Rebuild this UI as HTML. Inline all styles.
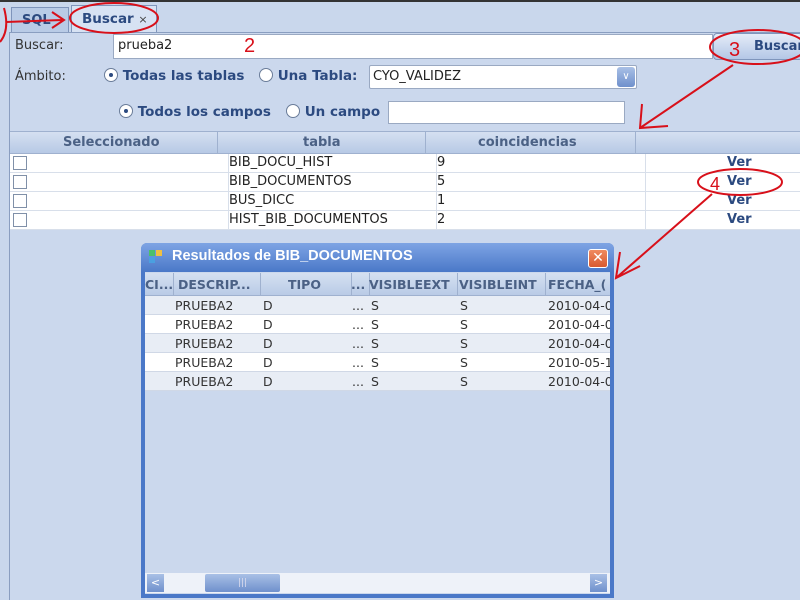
<!DOCTYPE html>
<html><head><meta charset="utf-8"><style>
*{margin:0;padding:0;box-sizing:border-box}
body{width:800px;height:600px;overflow:hidden;background:#c9d7ec;font-family:"DejaVu Sans","Liberation Sans",sans-serif;position:relative;color:#222}
.a{position:absolute}
.b{font-weight:bold;color:#2c4a80}
.in{background:#fff;border:1px solid #9aa9c2}
.radio{display:inline-block;width:14px;height:14px;border:1px solid #6a7c99;border-radius:50%;background:#fff;vertical-align:-2px;position:relative}
.radio.on:after{content:"";position:absolute;left:4px;top:4px;width:4px;height:4px;border-radius:50%;background:#2c4a80}
.cb{position:absolute;left:3px;width:14px;height:14px;border:1px solid #8090a8;background:#fff}
.row{position:absolute;left:10px;width:790px;height:19px;background:#fff;border-bottom:1px solid #d8dfea;font-size:13px}
.row span{position:absolute;top:1px}
.wr{position:absolute;left:145px;width:465px;height:19px;border-bottom:1px solid #d0d8e6;font-size:12.5px;color:#333;overflow:hidden;white-space:nowrap}
.wr span{position:absolute;top:2px;white-space:nowrap}
</style></head><body>
<div class="a" style="left:0;top:0;width:800px;height:2px;background:#333"></div>
<div class="a" style="left:11px;top:7px;width:58px;height:25px;background:#b9cbe6;border:1px solid #7f95bb;border-bottom:none;font-size:13px;color:#2c4a80;font-weight:bold;padding:5px 0 0 10px">SQL</div>
<div class="a" style="left:71px;top:5px;width:86px;height:28px;background:#d7e2f3;border:1px solid #7f95bb;border-bottom:none;font-size:13.5px;color:#2c4a80;font-weight:bold;padding:5px 0 0 10px">Buscar <span style="font-weight:normal;font-size:11px;color:#444">×</span></div>
<div class="a" style="left:9px;top:32px;width:791px;height:568px;border-left:1px solid #8a9ec0;border-top:1px solid #8a9ec0;background:#cbd8ed"></div>
<div class="a" style="left:15px;top:38px;font-size:13px;color:#333">Buscar:</div>
<div class="a in" style="left:113px;top:34px;width:600px;height:25px;font-size:13px;padding:3px 4px">prueba2</div>
<div class="a" style="left:713px;top:33px;width:90px;height:27px;background:linear-gradient(#e4ecf8,#b4c7e6);border:1px solid #7f95bb;border-radius:4px;font-size:13px;font-weight:bold;color:#2c4a80;padding:5px 0 0 40px">Buscar</div>
<div class="a" style="left:15px;top:69px;font-size:13px;color:#333">Ámbito:</div>
<div class="a b" style="left:104px;top:68px;font-size:13.5px"><span class="radio on"></span> Todas las tablas</div>
<div class="a b" style="left:259px;top:68px;font-size:13.5px"><span class="radio"></span> Una Tabla:</div>
<div class="a in" style="left:369px;top:65px;width:268px;height:24px;font-size:13px;padding:3px 3px;border-radius:2px">CYO_VALIDEZ</div>
<div class="a" style="left:617px;top:67px;width:18px;height:20px;background:linear-gradient(#a9c0e6,#6f90cc);border-radius:3px;color:#fff;font-size:10px;text-align:center;line-height:20px">∨</div>
<div class="a b" style="left:119px;top:104px;font-size:13.5px"><span class="radio on"></span> Todos los campos</div>
<div class="a b" style="left:286px;top:104px;font-size:13.5px"><span class="radio"></span> Un campo</div>
<div class="a in" style="left:388px;top:101px;width:237px;height:23px"></div>
<div class="a" style="left:10px;top:131px;width:790px;height:23px;background:linear-gradient(#d5e0f1,#b7c9e5);border-top:1px solid #9fb1cf;border-bottom:1px solid #9fb1cf;font-size:13px;font-weight:bold;color:#4b6185">
<span class="a" style="left:53px;top:3px">Seleccionado</span>
<span class="a" style="left:207px;top:0;width:1px;height:22px;background:#9fb1cf"></span>
<span class="a" style="left:293px;top:3px">tabla</span>
<span class="a" style="left:415px;top:0;width:1px;height:22px;background:#9fb1cf"></span>
<span class="a" style="left:468px;top:3px">coincidencias</span>
<span class="a" style="left:625px;top:0;width:1px;height:22px;background:#9fb1cf"></span>
</div>
<div class="row" style="top:154px"><div class="cb" style="top:2px"></div><span style="left:219px">BIB_DOCU_HIST</span><span style="left:427px">9</span><span style="left:717px;font-weight:bold;color:#2c4a80">Ver</span></div>
<div class="row" style="top:173px"><div class="cb" style="top:2px"></div><span style="left:219px">BIB_DOCUMENTOS</span><span style="left:427px">5</span><span style="left:717px;font-weight:bold;color:#2c4a80">Ver</span></div>
<div class="row" style="top:192px"><div class="cb" style="top:2px"></div><span style="left:219px">BUS_DICC</span><span style="left:427px">1</span><span style="left:717px;font-weight:bold;color:#2c4a80">Ver</span></div>
<div class="row" style="top:211px"><div class="cb" style="top:2px"></div><span style="left:219px">HIST_BIB_DOCUMENTOS</span><span style="left:427px">2</span><span style="left:717px;font-weight:bold;color:#2c4a80">Ver</span></div>
<div class="a" style="left:228px;top:154px;width:1px;height:76px;background:#d8dfea"></div>
<div class="a" style="left:436px;top:154px;width:1px;height:76px;background:#d8dfea"></div>
<div class="a" style="left:645px;top:154px;width:1px;height:76px;background:#d8dfea"></div>
<div class="a" style="left:141px;top:243px;width:473px;height:355px;background:#4a78c8;border-radius:6px 6px 0 0"></div>
<div class="a" style="left:141px;top:243px;width:473px;height:29px;background:linear-gradient(#7ea4e4,#4a78c8);border-radius:6px 6px 0 0"></div>
<div class="a" style="left:149px;top:250px;width:6px;height:6px;background:#4bc06a"></div>
<div class="a" style="left:156px;top:250px;width:6px;height:6px;background:#f0c040"></div>
<div class="a" style="left:149px;top:257px;width:6px;height:6px;background:#4aa0e0"></div>
<div class="a" style="left:172px;top:248px;font-size:14.5px;font-weight:bold;color:#fff;font-family:'Liberation Sans',sans-serif">Resultados de BIB_DOCUMENTOS</div>
<div class="a" style="left:588px;top:249px;width:20px;height:19px;background:linear-gradient(#f08a60,#d85a30);border:1px solid #fff;border-radius:3px;color:#fff;font-size:14px;font-weight:bold;text-align:center;line-height:17px">✕</div>
<div class="a" style="left:145px;top:272px;width:465px;height:322px;background:#cbd8ed"></div>
<div class="a" style="left:145px;top:273px;width:465px;height:23px;background:linear-gradient(#d5e0f1,#b9cbe6);border-bottom:1px solid #9fb1cf;font-size:12.5px;font-weight:bold;color:#4b6185;overflow:hidden;white-space:nowrap">
<span class="a" style="left:0;top:4px">CI...</span><span class="a" style="left:28px;top:0;width:1px;height:22px;background:#9fb1cf"></span>
<span class="a" style="left:33px;top:4px">DESCRIP...</span><span class="a" style="left:115px;top:0;width:1px;height:22px;background:#9fb1cf"></span>
<span class="a" style="left:143px;top:4px">TIPO</span><span class="a" style="left:206px;top:0;width:1px;height:22px;background:#9fb1cf"></span>
<span class="a" style="left:206px;top:4px">...</span><span class="a" style="left:224px;top:0;width:1px;height:22px;background:#9fb1cf"></span>
<span class="a" style="left:224px;top:4px">VISIBLEEXT</span><span class="a" style="left:312px;top:0;width:1px;height:22px;background:#9fb1cf"></span>
<span class="a" style="left:314px;top:4px">VISIBLEINT</span><span class="a" style="left:400px;top:0;width:1px;height:22px;background:#9fb1cf"></span>
<span class="a" style="left:403px;top:4px">FECHA_(</span></div>
<div class="wr" style="top:296px;background:#e8edf5"><span style="left:30px">PRUEBA2</span><span style="left:118px">D</span><span style="left:207px">...</span><span style="left:226px">S</span><span style="left:315px">S</span><span style="left:403px">2010-04-0</span></div>
<div class="wr" style="top:315px;background:#fff"><span style="left:30px">PRUEBA2</span><span style="left:118px">D</span><span style="left:207px">...</span><span style="left:226px">S</span><span style="left:315px">S</span><span style="left:403px">2010-04-0</span></div>
<div class="wr" style="top:334px;background:#e8edf5"><span style="left:30px">PRUEBA2</span><span style="left:118px">D</span><span style="left:207px">...</span><span style="left:226px">S</span><span style="left:315px">S</span><span style="left:403px">2010-04-0</span></div>
<div class="wr" style="top:353px;background:#fff"><span style="left:30px">PRUEBA2</span><span style="left:118px">D</span><span style="left:207px">...</span><span style="left:226px">S</span><span style="left:315px">S</span><span style="left:403px">2010-05-1</span></div>
<div class="wr" style="top:372px;background:#e8edf5"><span style="left:30px">PRUEBA2</span><span style="left:118px">D</span><span style="left:207px">...</span><span style="left:226px">S</span><span style="left:315px">S</span><span style="left:403px">2010-04-0</span></div>
<div class="a" style="left:145px;top:573px;width:465px;height:20px;background:#eef2f9"></div>
<div class="a" style="left:147px;top:574px;width:17px;height:18px;background:linear-gradient(#a9c0e6,#6f90cc);color:#fff;font-size:11px;text-align:center;line-height:18px">&lt;</div>
<div class="a" style="left:205px;top:574px;width:75px;height:18px;background:linear-gradient(#a9c0e6,#6f90cc);border-radius:2px;color:#dde;font-size:9px;text-align:center;line-height:18px">|||</div>
<div class="a" style="left:590px;top:574px;width:17px;height:18px;background:linear-gradient(#a9c0e6,#6f90cc);color:#fff;font-size:11px;text-align:center;line-height:18px">&gt;</div>
<svg class="a" style="left:0;top:0" width="800" height="600" fill="none" stroke="#d8101a" stroke-width="2">
<ellipse cx="114" cy="18" rx="44" ry="15"/>
<path d="M4 8 Q10 30 0 42"/>
<path d="M6 22 L62 20 M52 12 L64 20 L52 28"/>
<ellipse cx="758" cy="47" rx="48" ry="17"/>
<path d="M733 65 L640 128 M642 104 L640 128 L668 126"/>
<ellipse cx="740" cy="182" rx="42" ry="13"/>
<path d="M712 194 L616 278 M620 252 L616 278 L640 266"/>
<text x="244" y="52" fill="#d8101a" stroke="none" font-size="20" font-family="Liberation Sans">2</text>
<text x="729" y="56" fill="#d8101a" stroke="none" font-size="20" font-family="Liberation Sans">3</text>
<text x="710" y="190" fill="#d8101a" stroke="none" font-size="18" font-family="Liberation Sans">4</text>
</svg>
</body></html>
